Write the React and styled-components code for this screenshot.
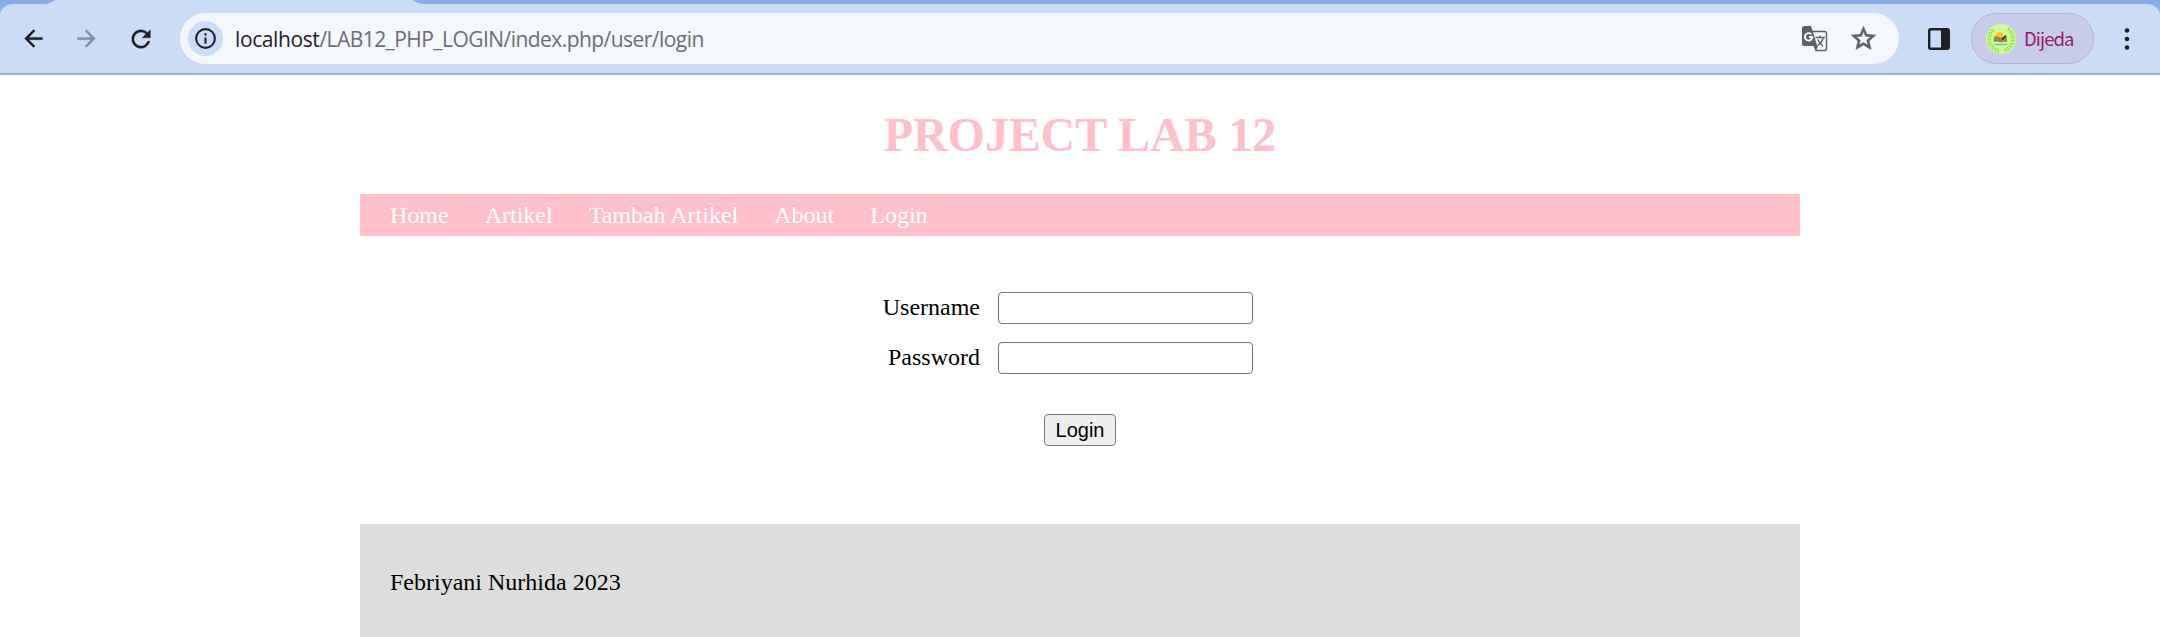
import React from "react";
import styled, { createGlobalStyle } from "styled-components";

const GlobalStyle = createGlobalStyle`
  * { box-sizing: border-box; }
  body { margin: 0; background: #fff; overflow: hidden; }
`;

const Window = styled.div`
  width: 2160px;
  height: 637px;
  overflow: hidden;
  background: #fff;
  color: #000;
  font-family: "Liberation Serif", "Times New Roman", serif;
  font-size: 24px;
`;

const Browser = styled.header`
  height: 75px;
  background: #85ace9;
`;

const TabStrip = styled.div`
  height: 4px;
  padding-left: 46px;
`;

const TabEdge = styled.svg`
  display: block;
`;

const Toolbar = styled.div`
  display: flex;
  align-items: center;
  height: 71px;
  padding: 0 16px 0 16px;
  background: #cbdcf6;
  border-bottom: 2px solid #a3b1ca;
  border-radius: 12px 12px 0 0;
`;

const IconButton = styled.button`
  display: flex;
  align-items: center;
  justify-content: center;
  flex: none;
  width: ${(p) => p.$width || 34}px;
  height: 34px;
  margin: 0 ${(p) => p.$gap || 0}px 0 0;
  padding: 0;
  border: 0;
  background: none;
  color: ${(p) => p.$color || "#1f2023"};
`;

const AddressBar = styled.div`
  display: flex;
  align-items: center;
  flex: none;
  width: 1719px;
  height: 51px;
  margin-right: 7px;
  padding: 0 19px 0 8px;
  border-radius: 26px;
  background: #f4f7fc;
`;

const SiteInfo = styled.div`
  display: flex;
  align-items: center;
  justify-content: center;
  width: 35px;
  height: 35px;
  border-radius: 50%;
  background: #cbdcf6;
  color: #1f2023;
`;

const Url = styled.div`
  flex: 1;
  margin-left: 12px;
  color: #6b6e72;
  font-family: "Open Sans", "Noto Sans", sans-serif;
  font-size: 21px;
  line-height: 30px;
  letter-spacing: -0.55px;
  white-space: nowrap;
`;

const Host = styled.span`
  color: #1f2023;
  letter-spacing: -0.4px;
`;

const Profile = styled.div`
  display: flex;
  align-items: center;
  flex: none;
  width: 123px;
  height: 51px;
  margin: 0 16px 0 0;
  padding-left: 14px;
  border: 1px solid #afb5d8;
  border-radius: 26px;
  background: #c8cceb;
  color: #9c1a6b;
  font-family: "Noto Sans CJK JP", sans-serif;
  font-size: 18.5px;
  font-weight: 400;
  letter-spacing: -0.9px;
  line-height: 28px;
`;

const ProfileName = styled.span`
  margin: 0 0 1px 8px;
`;

const Container = styled.div`
  width: 1440px;
  margin: 0 auto;
`;

const Title = styled.h1`
  height: 119px;
  margin: 0;
  padding-top: 32px;
  color: #ffc0cb;
  font-size: 48px;
  line-height: 55px;
  letter-spacing: -0.1px;
  text-align: center;
`;

const Nav = styled.nav`
  display: flex;
  align-items: center;
  gap: 36px;
  height: 42px;
  padding-left: 30px;
  background: #ffc0cb;
`;

const NavLink = styled.a`
  color: #fff;
  line-height: 27px;
`;

const Form = styled.form`
  height: 288px;
  padding-top: 56px;
`;

const Field = styled.div`
  display: flex;
  align-items: center;
  height: 32px;
  margin-bottom: 18px;
`;

const Label = styled.label`
  width: 620px;
  margin-right: 18px;
  padding-bottom: 2px;
  line-height: 27px;
  text-align: right;
`;

const Input = styled.input`
  width: 255px;
  height: 32px;
  padding: 1px 3px;
  border: 1px solid #767676;
  border-radius: 4px;
  background: #fff;
  font: 20px "Liberation Sans", Arial, sans-serif;
`;

const Submit = styled.button`
  display: block;
  width: 72px;
  height: 32px;
  margin: 40px auto 0;
  padding: 0;
  border: 1px solid #767676;
  border-radius: 4px;
  background: #efefef;
  color: #000;
  font: 20px/30px "Liberation Sans", Arial, sans-serif;
`;

const Footer = styled.footer`
  height: 113px;
  padding: 45px 30px 0;
  background: #ddd;
  line-height: 27px;
`;

const Glyph = ({ size, d, weight = 0 }) => (
  <svg width={size} height={size} viewBox="0 0 24 24" fill="currentColor" stroke="currentColor" strokeWidth={weight}>
    <path d={d} />
  </svg>
);

const TranslateIcon = () => (
  <svg width="26" height="26" viewBox="0 0 26 26" fill="none">
    <path d="M9 5.500h13.500a2 2 0 0 1 2 2v15a2 2 0 0 1-2 2H14L9 5.500z" fill="#f4f7fc" stroke="#5f6164" strokeWidth="1.400" />
    <path d="M2.500 0H9l1.700 5 4.500 15H2.500A2.500 2.500 0 0 1 0 17.500V2.500A2.500 2.500 0 0 1 2.500 0z" fill="#5f6164" />
    <path d="M11.500 20l2.200 5 2.500-5z" fill="#5f6164" />
    <path d="M9.300 8.300A3.700 3.700 0 1 0 10.300 11H7" stroke="#f4f7fc" strokeWidth="1.900" />
    <path d="M13.500 11.500H23M18 9.500v2M21.300 11.500c-.8 3.500-3.300 6.500-5.800 8M15.800 13.500c1.200 2.500 3 4.800 5.200 6.700" stroke="#5f6164" strokeWidth="1.400" />
  </svg>
);

const leaves = Array.from({ length: 9 }, (_, i) => 42 + i * 15);

const Avatar = () => (
  <svg width="30" height="30" viewBox="0 0 30 30">
    <circle cx="15" cy="15" r="15" fill="#d8f5a0" />
    {[1, -1].map((side) =>
      leaves.map((a) => (
        <g key={`${side}${a}`} transform={`rotate(${side * a} 15 15)`}>
          <ellipse cx="14" cy="2.200" rx="1.600" ry=".7" fill="#72ed28" transform="rotate(28 14 2.200)" />
          <ellipse cx="14.500" cy="4.200" rx="1.300" ry=".6" fill="#72ed28" transform="rotate(-28 14.500 4.200)" />
        </g>
      ))
    )}
    <circle cx="13.500" cy="12" r="4" fill="#ffc51b" />
    <path d="M8 12.500q4-1 7 1.500 3-2 6-1.500v5.500q-4-.5-6 .5-3-1.500-7-.5z" fill="#918c48" />
    <path d="M16 15.500l4-4" stroke="#29291d" strokeWidth="1.500" />
    <path d="M8.500 20.500h13" stroke="#52cbb6" strokeWidth="1.300" />
  </svg>
);

const navItems = ["Home", "Artikel", "Tambah Artikel", "About", "Login"];

export default function App() {
  return (
    <Window>
      <GlobalStyle />
      <Browser>
        <TabStrip>
          <TabEdge width="376" height="4" viewBox="0 0 376 4">
            <path d="M0 4q5-1 9-4h358q4 3 9 4z" fill="#cbdcf6" />
          </TabEdge>
        </TabStrip>
        <Toolbar>
          <IconButton $gap={19} aria-label="Back">
            <Glyph size={27} weight={0.3} d="M20 11H7.830l5.590-5.590L12 4l-8 8 8 8 1.410-1.410L7.830 13H20v-2z" />
          </IconButton>
          <IconButton $gap={21} $color="#8390a7" aria-label="Forward">
            <Glyph size={27} weight={0.3} d="M12 4l-1.410 1.410L16.170 11H4v2h12.170l-5.580 5.590L12 20l8-8z" />
          </IconButton>
          <IconButton $gap={22} aria-label="Reload">
            <Glyph size={28} weight={0.3} d="M17.650 6.350A7.960 7.960 0 0 0 12 4a8 8 0 1 0 7.730 10h-2.080A6 6 0 1 1 12 6c1.660 0 3.140.690 4.220 1.780L13 11h7V4l-2.350 2.350z" />
          </IconButton>
          <AddressBar>
            <SiteInfo>
              <Glyph size={25} d="M11 7h2v2h-2zm0 4h2v6h-2zm1-9a10 10 0 1 0 0 20 10 10 0 0 0 0-20zm0 18a8 8 0 1 1 0-16 8 8 0 0 1 0 16z" />
            </SiteInfo>
            <Url>
              <Host>localhost</Host>/LAB12_PHP_LOGIN/index.php/user/login
            </Url>
            <IconButton $gap={14} aria-label="Translate">
              <TranslateIcon />
            </IconButton>
            <IconButton $color="#5f6164" aria-label="Bookmark">
              <Glyph size={29} weight={0.6} d="M22 9.240l-7.190-.62L12 2 9.190 8.630 2 9.240l5.460 4.730L5.820 21 12 17.270 18.180 21l-1.630-7.030L22 9.240zM12 15.400l-3.760 2.270 1-4.280-3.320-2.880 4.380-.38L12 6.100l1.710 4.040 4.380.38-3.320 2.880 1 4.280L12 15.400z" />
            </IconButton>
          </AddressBar>
          <IconButton $width={65} aria-label="Side panel">
            <svg width="22" height="22" viewBox="0 0 22 22">
              <rect x="1.200" y="1.200" width="19.600" height="19.600" rx="1.500" fill="none" stroke="currentColor" strokeWidth="2.400" />
              <path d="M13 1h8v20h-8z" fill="currentColor" />
            </svg>
          </IconButton>
          <Profile>
            <Avatar />
            <ProfileName>Dijeda</ProfileName>
          </Profile>
          <IconButton aria-label="Menu">
            <svg width="6" height="22" viewBox="0 0 6 22" fill="currentColor">
              <circle cx="3" cy="2.500" r="2.300" />
              <circle cx="3" cy="11" r="2.300" />
              <circle cx="3" cy="19.500" r="2.300" />
            </svg>
          </IconButton>
        </Toolbar>
      </Browser>
      <Container>
        <Title>PROJECT LAB 12</Title>
        <Nav>
          {navItems.map((item) => (
            <NavLink key={item}>{item}</NavLink>
          ))}
        </Nav>
        <Form>
          <Field>
            <Label>Username</Label>
            <Input type="text" />
          </Field>
          <Field>
            <Label>Password</Label>
            <Input type="password" />
          </Field>
          <Submit type="button">Login</Submit>
        </Form>
        <Footer>Febriyani Nurhida 2023</Footer>
      </Container>
    </Window>
  );
}
